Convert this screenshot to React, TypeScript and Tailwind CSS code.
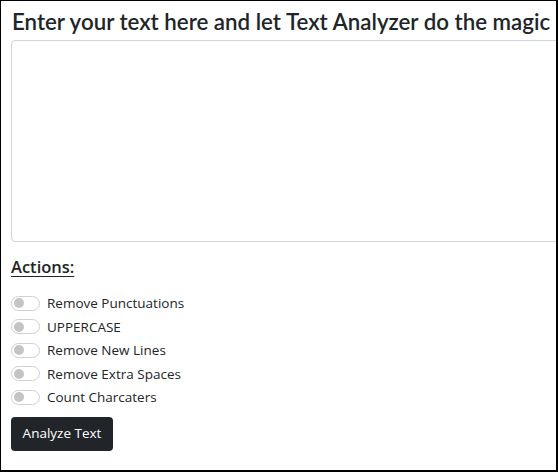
import React, { useState } from 'react';

const options = [
  'Remove Punctuations',
  'UPPERCASE',
  'Remove New Lines',
  'Remove Extra Spaces',
  'Count Charcaters',
];

export default function App() {
  const [text, setText] = useState('');
  const [checked, setChecked] = useState<boolean[]>(options.map(() => false));

  return (
    <div className="w-[558px] h-[472px] overflow-hidden bg-white border-black border-t border-l border-r-2 border-b-2 text-[#212529] [font-family:'Open_Sans',sans-serif]">
      <div className="pl-[10px] w-[600px]">
        <h1 className="text-[22.3px] font-semibold leading-[28px] pt-[7px] pl-px whitespace-nowrap [font-family:Lato,sans-serif]">
          Enter your text here and let Text Analyzer do the magic
        </h1>
        <textarea
          value={text}
          onChange={e => setText(e.target.value)}
          className="block mt-[4px] w-[580px] h-[202px] border border-[#ced4da] rounded-[4px] resize-none focus:outline-none"
        />
        <h2 className="mt-[14px] text-[16.5px] font-semibold underline underline-offset-[3px] leading-[22px]">
          Actions:
        </h2>
        <div className="mt-[16px] flex flex-col gap-[5px]">
          {options.map((opt, i) => (
            <label key={opt} className="flex items-center gap-[7px] h-[18.5px] text-[13.5px] cursor-pointer">
              <button
                onClick={() => setChecked(c => c.map((v, j) => (j === i ? !v : v)))}
                className={`w-[29px] h-[15px] rounded-full border flex items-center px-[2px] ${
                  checked[i] ? 'bg-[#0d6efd] border-[#0d6efd] justify-end' : 'bg-white border-[#d0d0d0] justify-start'
                }`}
              >
                <span className={`block w-[10px] h-[10px] rounded-full ${checked[i] ? 'bg-white' : 'bg-[#c4c4c4]'}`} />
              </button>
              <span>{opt}</span>
            </label>
          ))}
        </div>
        <button className="mt-[10px] bg-[#212529] text-white text-[13.5px] rounded-[4px] w-[102px] h-[34px]">
          Analyze Text
        </button>
      </div>
    </div>
  );
}
